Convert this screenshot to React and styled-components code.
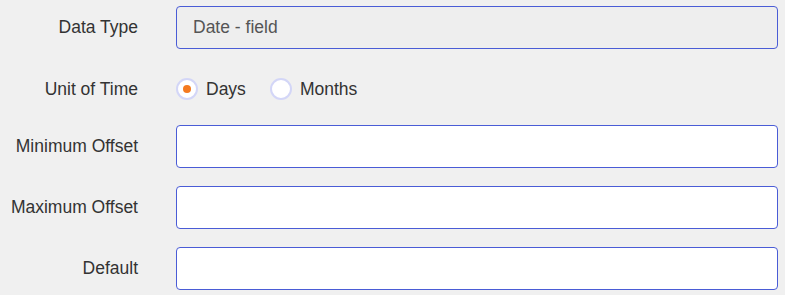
import React, { useState } from 'react';
import styled, { createGlobalStyle } from 'styled-components';

const GlobalStyle = createGlobalStyle`
  html, body {
    margin: 0;
    padding: 0;
    background: #f0f0f0;
    font-family: "Liberation Sans", Arial, sans-serif;
  }
`;

const Form = styled.form`
  display: flex;
  flex-direction: column;
  gap: 18px;
  padding: 6px 7px 0 0;
`;

const Row = styled.div`
  display: grid;
  grid-template-columns: 138px 1fr;
  column-gap: 38px;
  align-items: center;
  height: ${p => (p.$compact ? '40px' : '43px')};
  padding-top: ${p => (p.$compact ? '4px' : '0')};
  box-sizing: border-box;
`;

const Label = styled.label`
  text-align: right;
  font-size: 17.5px;
  color: #333;
  white-space: nowrap;
`;

const Input = styled.input`
  box-sizing: border-box;
  height: 43px;
  width: 100%;
  border: 1px solid #4a5cd6;
  border-radius: 4px;
  background: ${p => (p.readOnly ? '#eeeeee' : '#ffffff')};
  padding: 0 16px;
  font-family: inherit;
  font-size: 17.5px;
  color: #555;
  outline: none;
`;

const RadioGroup = styled.div`
  display: flex;
  align-items: center;
  gap: 24px;
`;

const RadioOption = styled.label`
  display: flex;
  align-items: center;
  gap: 8px;
  font-size: 17.5px;
  color: #333;
  cursor: pointer;
`;

const RadioCircle = styled.span`
  box-sizing: border-box;
  width: 22px;
  height: 22px;
  border-radius: 50%;
  background: #fff;
  border: 2px solid #d3d6f7;
  display: flex;
  align-items: center;
  justify-content: center;
  &::after {
    content: '';
    width: 8px;
    height: 8px;
    border-radius: 50%;
    background: ${p => (p.$checked ? '#f47a1f' : 'transparent')};
  }
`;

export default function App() {
  const [unit, setUnit] = useState('days');
  return (
    <>
      <GlobalStyle />
      <Form onSubmit={e => e.preventDefault()}>
        <Row>
          <Label>Data Type</Label>
          <Input readOnly value="Date - field" />
        </Row>
        <Row $compact>
          <Label>Unit of Time</Label>
          <RadioGroup>
            <RadioOption onClick={() => setUnit('days')}>
              <RadioCircle $checked={unit === 'days'} />
              Days
            </RadioOption>
            <RadioOption onClick={() => setUnit('months')}>
              <RadioCircle $checked={unit === 'months'} />
              Months
            </RadioOption>
          </RadioGroup>
        </Row>
        <Row>
          <Label>Minimum Offset</Label>
          <Input />
        </Row>
        <Row>
          <Label>Maximum Offset</Label>
          <Input />
        </Row>
        <Row>
          <Label>Default</Label>
          <Input />
        </Row>
      </Form>
    </>
  );
}
